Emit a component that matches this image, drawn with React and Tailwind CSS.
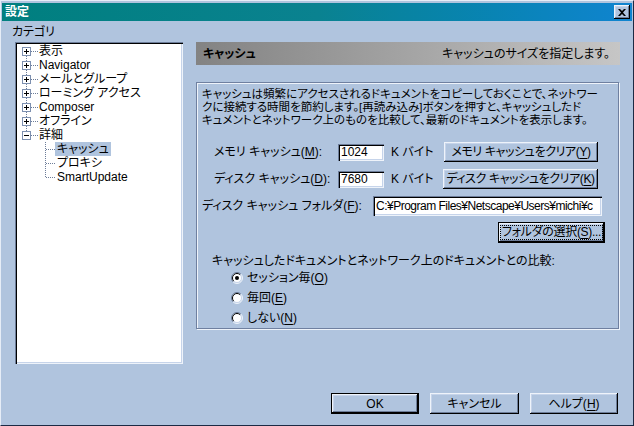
import React from 'react';

const btn =
  'flex items-center justify-center bg-[#b0c4de] shadow-[inset_-1px_-1px_0_#000,inset_1px_1px_0_#eef3fa,inset_-2px_-2px_0_#6d7d99,inset_2px_2px_0_#c6d4ea]';
const field =
  'bg-white shadow-[inset_1px_1px_0_#6d7d99,inset_2px_2px_0_#000,inset_-1px_-1px_0_#eef3fa,inset_-2px_-2px_0_#c6d4ea]';

function U({ c }) {
  return <span className="underline underline-offset-[2px]">{c}</span>;
}

function Box({ first, last, open }) {
  return (
    <svg width="21" height="14" viewBox="0 0 21 14" className="shrink-0">
      <line x1="9.5" y1={first ? 8 : 0} x2="9.5" y2={last ? 7 : 14} stroke="#6d7d99" strokeDasharray="1 1" />
      <line x1="14" y1="7.5" x2="21" y2="7.5" stroke="#6d7d99" strokeDasharray="1 1" />
      <rect x="5.5" y="3.5" width="8" height="8" fill="#fff" stroke="#7d90b0" />
      <line x1="7" y1="7.5" x2="12" y2="7.5" stroke="#000" />
      {!open && <line x1="9.5" y1="5" x2="9.5" y2="10" stroke="#000" />}
    </svg>
  );
}

function Branch({ last }) {
  return (
    <svg width="38" height="14" viewBox="0 0 38 14" className="shrink-0">
      <line x1="28.5" y1="0" x2="28.5" y2={last ? 8 : 14} stroke="#6d7d99" strokeDasharray="1 1" />
      <line x1="29" y1="7.5" x2="38" y2="7.5" stroke="#6d7d99" strokeDasharray="1 1" />
    </svg>
  );
}

function Radio({ checked }) {
  return (
    <svg width="12" height="12" viewBox="0 0 12 12" className="shrink-0">
      <circle cx="6" cy="6" r="5" fill="#fff" />
      <path d="M2.1 9.9 A5.5 5.5 0 0 1 9.9 2.1" fill="none" stroke="#6d7d99" />
      <path d="M9.9 2.1 A5.5 5.5 0 0 1 2.1 9.9" fill="none" stroke="#eef3fa" />
      <path d="M2.8 9.2 A4.5 4.5 0 0 1 9.2 2.8" fill="none" stroke="#000" />
      <path d="M9.2 2.8 A4.5 4.5 0 0 1 2.8 9.2" fill="none" stroke="#c6d4ea" />
      {checked && <circle cx="6" cy="6" r="2" fill="#000" />}
    </svg>
  );
}

const topItems = ['表示', 'Navigator', 'メールとグループ', 'ローミング アクセス', 'Composer', 'オフライン', '詳細'];
const subItems = ['キャッシュ', 'プロキシ', 'SmartUpdate'];

export default function App() {
  return (
    <div className="w-[634px] h-[426px] flex flex-col bg-[#b0c4de] border border-t-[#e6edf7] border-l-[#e6edf7] border-r-[#1c2a44] border-b-[#1c2a44] pt-[2px] text-[12px] text-black font-['Liberation_Sans','Noto_Sans_CJK_JP',sans-serif] [font-feature-settings:'palt'] overflow-hidden">
      {/* title bar */}
      <div className="mx-[1px] h-[18px] flex items-center justify-between bg-linear-to-r from-[#007f7f] via-[#0a8290] to-[#1084d0] pl-[3px] pr-[2px]">
        <span className="text-white font-bold leading-[18px]">設定</span>
        <div className={`${btn} w-[16px] h-[14px]`}>
          <svg width="8" height="7" viewBox="0 0 8 7">
            <path d="M0 0h2l2 2 2-2h2L5 3.5 8 7H6L4 5 2 7H0l3-3.5z" fill="#000" />
          </svg>
        </div>
      </div>

      <div className="h-[21px] pl-[11px] flex items-center leading-[14px]">カテゴリ</div>

      <div className="flex pl-[14px] gap-[13px]">
        {/* tree */}
        <div className="w-[168px] h-[322px] bg-white shadow-[inset_1px_1px_0_#6d7d99,inset_2px_2px_0_#000,inset_-1px_-1px_0_#eef3fa,inset_-2px_-2px_0_#c6d4ea] pt-[2px] pl-[2px] leading-[14px]">
          {topItems.map((t, i) => (
            <div key={t} className="flex items-center h-[14px] whitespace-nowrap">
              <Box first={i === 0} last={i === topItems.length - 1} open={i === topItems.length - 1} />
              <span className="pl-[1px]">{t}</span>
            </div>
          ))}
          {subItems.map((t, i) => (
            <div key={t} className="flex items-center h-[14px] whitespace-nowrap">
              <Branch last={i === subItems.length - 1} />
              <span className={`px-[2px] ${i === 0 ? 'bg-[#b0c4de]' : ''}`}>{t}</span>
            </div>
          ))}
        </div>

        {/* right side */}
        <div className="w-[424px] flex flex-col">
          <div className="h-[23px] flex items-center justify-between pl-[7px] pr-[10px] bg-linear-to-r from-[#838383] to-[#c6c6c6]">
            <span className="font-bold">キャッシュ</span>
            <span>キャッシュのサイズを指定します。</span>
          </div>

          <div className="mt-[17px] w-[423px] h-[247px] border border-[#6f80a0] shadow-[inset_1px_1px_0_#eef3fa,1px_1px_0_#eef3fa] pt-[5px] pl-[5px] pr-[13px] flex flex-col">
            <div className="leading-[13px] whitespace-nowrap text-[11.5px]">
              <div>キャッシュは頻繁にアクセスされるドキュメントをコピーしておくことで、ネットワー</div>
              <div>クに接続する時間を節約します。[再読み込み]ボタンを押すと、キャッシュしたド</div>
              <div>キュメントとネットワーク上のものを比較して、最新のドキュメントを表示します。</div>
            </div>

            <div className="mt-[15px] flex items-center h-[20px] whitespace-nowrap">
              <span className="w-[124px] ml-[12px]">メモリ キャッシュ(<U c="M" />):</span>
              <div className={`${field} w-[46px] h-[17px] pl-[3px] leading-[17px]`}>1024</div>
              <span className="w-[60px] pl-[7px]">K バイト</span>
              <div className={`${btn} w-[154px] h-[20px] tracking-[-0.4px]`}>メモリ キャッシュをクリア(<U c="Y" />)</div>
            </div>

            <div className="mt-[7px] flex items-center h-[20px] whitespace-nowrap">
              <span className="w-[124px] ml-[12px]">ディスク キャッシュ(<U c="D" />):</span>
              <div className={`${field} w-[46px] h-[17px] pl-[3px] leading-[17px]`}>7680</div>
              <span className="w-[59px] pl-[7px]">K バイト</span>
              <div className={`${btn} w-[155px] h-[20px] tracking-[-0.4px]`}>ディスク キャッシュをクリア(<U c="K" />)</div>
            </div>

            <div className="mt-[7px] flex items-center h-[20px] whitespace-nowrap">
              <span className="w-[171px]">ディスク キャッシュ フォルダ(<U c="F" />):</span>
              <div className={`${field} w-[229px] h-[20px] pl-[3px] leading-[20px] overflow-hidden tracking-[-0.5px]`}>
                C:¥Program Files¥Netscape¥Users¥michi¥c
              </div>
            </div>

            <div className="mt-[6px] flex justify-end">
              <div className="w-[107px] h-[21px] border border-black">
                <div className={`${btn} w-full h-full`}>
                  <span className="outline outline-1 outline-dotted outline-black px-[1px] leading-[13px] whitespace-nowrap tracking-[-0.3px]">
                    フォルダの選択(<U c="S" />)...
                  </span>
                </div>
              </div>
            </div>

            <div className="mt-[11px] h-[14px] pl-[10px] flex items-center whitespace-nowrap">
              キャッシュしたドキュメントとネットワーク上のドキュメントとの比較:
            </div>

            {[
              ['セッション毎(', 'O', ')', true],
              ['毎回(', 'E', ')', false],
              ['しない(', 'N', ')', false],
            ].map(([a, k, b, c]) => (
              <div key={a} className="h-[20px] pl-[29px] flex items-center gap-[4px] whitespace-nowrap">
                <Radio checked={c} />
                <span>
                  {a}
                  <U c={k} />
                  {b}
                </span>
              </div>
            ))}
          </div>
        </div>
      </div>

      {/* bottom buttons */}
      <div className="mt-[29px] flex justify-end gap-[11px] pr-[15px]">
        <div className="w-[88px] h-[21px] border border-black">
          <div className={`${btn} w-full h-full`}>OK</div>
        </div>
        <div className={`${btn} w-[89px] h-[21px]`}>キャンセル</div>
        <div className={`${btn} w-[88px] h-[21px]`}>ヘルプ(<U c="H" />)</div>
      </div>
    </div>
  );
}
